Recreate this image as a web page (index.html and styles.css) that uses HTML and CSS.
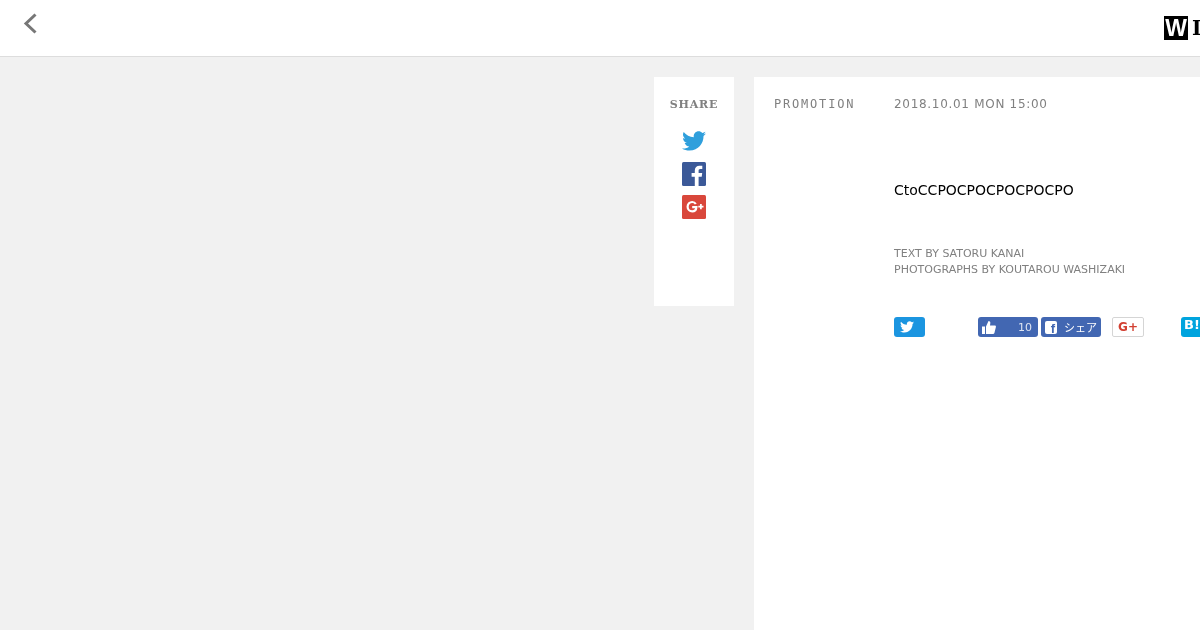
FILE: index.html
```html
<!DOCTYPE html>
<html lang="ja">
<head>
<meta charset="utf-8">
<title>WIRED</title>
<link rel="stylesheet" href="styles.css">
</head>
<body>
<header class="topbar">
  <a class="back" href="#" aria-label="back">
    <svg width="16" height="22" viewBox="0 0 16 22"><path d="M13.500 1.500 L4 10.500 L13.500 19.500" fill="none" stroke="#777" stroke-width="3"/></svg>
  </a>
  <div class="logo"><span class="logo-w">W</span><span class="logo-i">I</span></div>
</header>
<main class="layout">
  <aside class="share">
    <div class="share-title">SHARE</div>
    <div class="share-icons">
      <svg class="share-icon" viewBox="0 0 24 24"><path fill="#2f9fdc" d="M24 4.600c-.9.400-1.800.7-2.800.8 1-.6 1.800-1.600 2.200-2.700-1 .6-2 1-3.100 1.200C19.300 2.800 18 2.200 16.600 2.200c-2.700 0-4.900 2.200-4.900 4.900 0 .4 0 .8.100 1.100C7.700 8 4.100 6 1.700 3 1.300 3.700 1 4.600 1 5.500c0 1.700.9 3.200 2.200 4.100-.8 0-1.600-.2-2.200-.6v.1c0 2.400 1.700 4.400 3.900 4.800-.4.100-.8.200-1.300.2-.3 0-.6 0-.9-.1.600 2 2.400 3.400 4.600 3.400-1.700 1.300-3.800 2.100-6.100 2.100-.4 0-.8 0-1.200-.1 2.200 1.400 4.800 2.200 7.500 2.200 9.100 0 14-7.500 14-14v-.6c1-.7 1.800-1.600 2.500-2.500z"/></svg>
      <svg class="share-icon" viewBox="0 0 24 24"><rect width="24" height="24" rx="1.500" fill="#3b5998"/><path fill="#fff" d="M16.600 24v-9.300h3.100l.5-3.600h-3.600V8.800c0-1 .3-1.800 1.800-1.800h1.900V3.800c-.3 0-1.500-.1-2.800-.1-2.800 0-4.700 1.700-4.700 4.800v2.600H9.600v3.600h3.200V24z"/></svg>
      <svg class="share-icon" viewBox="0 0 24 24"><rect width="24" height="24" rx="1.500" fill="#d9473b"/><path fill="none" stroke="#fff" stroke-width="2.200" d="M13.800 9c-.8-1.300-2.100-2-3.600-2C7.700 7 5.600 9 5.600 11.700s2.100 4.700 4.600 4.700c2.400 0 4-1.500 4.200-4.200H10.200"/><path fill="none" stroke="#fff" stroke-width="1.700" d="M16.300 11.700h5.200M18.900 9.100v5.200"/></svg>
    </div>
  </aside>
  <article class="article">
    <div class="meta">
      <span class="category">PROMOTION</span>
      <time class="date">2018.10.01 MON 15:00</time>
    </div>
    <div class="content">
      <p class="lead">CtoCCPOCPOCPOCPOCPO</p>
      <p class="credits">TEXT BY SATORU KANAI<br>PHOTOGRAPHS BY KOUTAROU WASHIZAKI</p>
      <div class="social">
        <a class="btn btn-tw" href="#" aria-label="tweet"><svg width="14" height="12" viewBox="0 0 24 20"><path fill="#fff" d="M24 2.400c-.9.400-1.800.7-2.800.8 1-.6 1.800-1.600 2.200-2.700-1 .6-2 1-3.100 1.200C19.300.6 18 0 16.600 0c-2.700 0-4.900 2.200-4.900 4.900 0 .4 0 .8.100 1.100C7.700 5.800 4.100 3.800 1.700.8 1.300 1.500 1 2.400 1 3.300c0 1.700.9 3.200 2.200 4.100-.8 0-1.600-.2-2.200-.6v.1c0 2.400 1.700 4.400 3.900 4.800-.7.200-1.500.2-2.200.1.600 2 2.400 3.400 4.600 3.400C5.600 16.500 3.500 17.300 1.200 17.300c-.4 0-.8 0-1.200-.1 2.200 1.400 4.800 2.200 7.500 2.200 9.100 0 14-7.500 14-14v-.6c1-.7 1.800-1.600 2.500-2.400z"/></svg></a>
        <a class="btn btn-like" href="#"><svg width="14" height="13" viewBox="0 0 14 13"><path fill="#fff" d="M0 5.500h3V13H0zM4 5.500 6.500 0c1.300 0 2 .9 1.800 2.200L8 4.500h4.700c.9 0 1.400.8 1.200 1.600l-1.500 6c-.1.500-.6.900-1.200.9H4z"/></svg><span class="like-count">10</span></a>
        <a class="btn btn-fb" href="#"><span class="fb-mark">f</span><span class="fb-label">シェア</span></a>
        <a class="btn btn-gp" href="#">G+</a>
        <a class="btn btn-hb" href="#">B!</a>
      </div>
    </div>
  </article>
</main>
</body>
</html>
```
FILE: styles.css
```css
* { box-sizing: border-box; }
html, body { margin: 0; height: 100%; }
body {
  width: 1200px;
  height: 630px;
  overflow: hidden;
  background: #f1f1f1;
  font-family: "DejaVu Sans", sans-serif;
}
a { text-decoration: none; }

.topbar {
  height: 57px;
  background: #fff;
  border-bottom: 1px solid #ddd;
  display: flex;
  justify-content: space-between;
  padding: 13px 0 0 22px;
}
.back { display: block; height: 22px; }
.back svg { display: block; }
.logo {
  width: 36px;
  margin-top: 3px;
  display: flex;
  overflow: hidden;
  gap: 4px;
  height: 24px;
  will-change: transform;
}
.logo-w {
  flex: none;
  width: 24px;
  height: 24px;
  background: #000;
  color: #fff;
  font: bold 23px/25px "Liberation Sans", sans-serif;
  text-align: center;
}
.logo-i {
  flex: none;
  color: #000;
  font: bold 20px/24px "DejaVu Serif", serif;
}

.layout {
  display: flex;
  gap: 20px;
  padding: 20px 0 0 654px;
  height: 573px;
  overflow: hidden;
}
.share {
  flex: none;
  width: 80px;
  height: 229px;
  background: #fff;
  padding-top: 21px;
}
.share-title {
  font: bold 11px/14px "DejaVu Serif", serif;
  letter-spacing: .8px;
  color: #808080;
  text-align: center;
  will-change: transform;
}
.share-icons {
  display: flex;
  flex-direction: column;
  align-items: center;
  gap: 9px;
  margin-top: 17px;
}
.share-icon { width: 24px; height: 24px; display: block; }

.article {
  flex: none;
  width: 600px;
  background: #fff;
  padding: 20px 0 0 20px;
}
.meta {
  display: flex;
  font-size: 12px;
  line-height: 14px;
  color: #808080;
  will-change: transform;
}
.category { width: 120px; font-family: "DejaVu Sans Mono", monospace; letter-spacing: 1.800px; }
.date { letter-spacing: .7px; }
.content { margin-left: 120px; will-change: transform; }
.lead {
  margin: 69px 0 0;
  font-size: 14px;
  line-height: 20px;
  color: #000;
}
.credits {
  margin: 46px 0 0;
  font-size: 11px;
  line-height: 16px;
  color: #808080;
}
.social {
  display: flex;
  align-items: flex-start;
  margin-top: 39px;
  height: 24px;
}
.btn {
  display: flex;
  align-items: center;
  flex: none;
  height: 20px;
  border-radius: 3px;
  color: #fff;
}
.btn-tw { width: 31px; background: #1b95e0; padding-left: 6px; }
.btn-like { width: 60px; margin-left: 53px; background: #4267b2; padding: 0 6px 0 4px; justify-content: space-between; font-size: 11px; }
.like-count { color: #dfe5f2; }
.btn-fb { width: 60px; margin-left: 3px; background: #4267b2; padding-left: 4px; }
.fb-mark {
  flex: none;
  width: 12px;
  height: 13px;
  background: #fff;
  color: #4267b2;
  border-radius: 2px;
  font: bold 13px/15px "Liberation Sans", sans-serif;
  text-align: right;
  padding-right: 2px;
}
.fb-label { margin-left: 7px; font: 11px "Noto Sans CJK JP", sans-serif; }
.btn-gp {
  width: 32px;
  margin-left: 11px;
  background: #fff;
  border: 1px solid #d5d5d5;
  border-radius: 2px;
  color: #d23f31;
  font: bold 12px/18px "DejaVu Sans", sans-serif;
  justify-content: center;
}
.btn-hb {
  width: 30px;
  margin-left: 37px;
  background: #00a4de;
  font: bold 13px/16px "DejaVu Sans", sans-serif;
  align-items: flex-start;
  padding-left: 3px;
}
```
